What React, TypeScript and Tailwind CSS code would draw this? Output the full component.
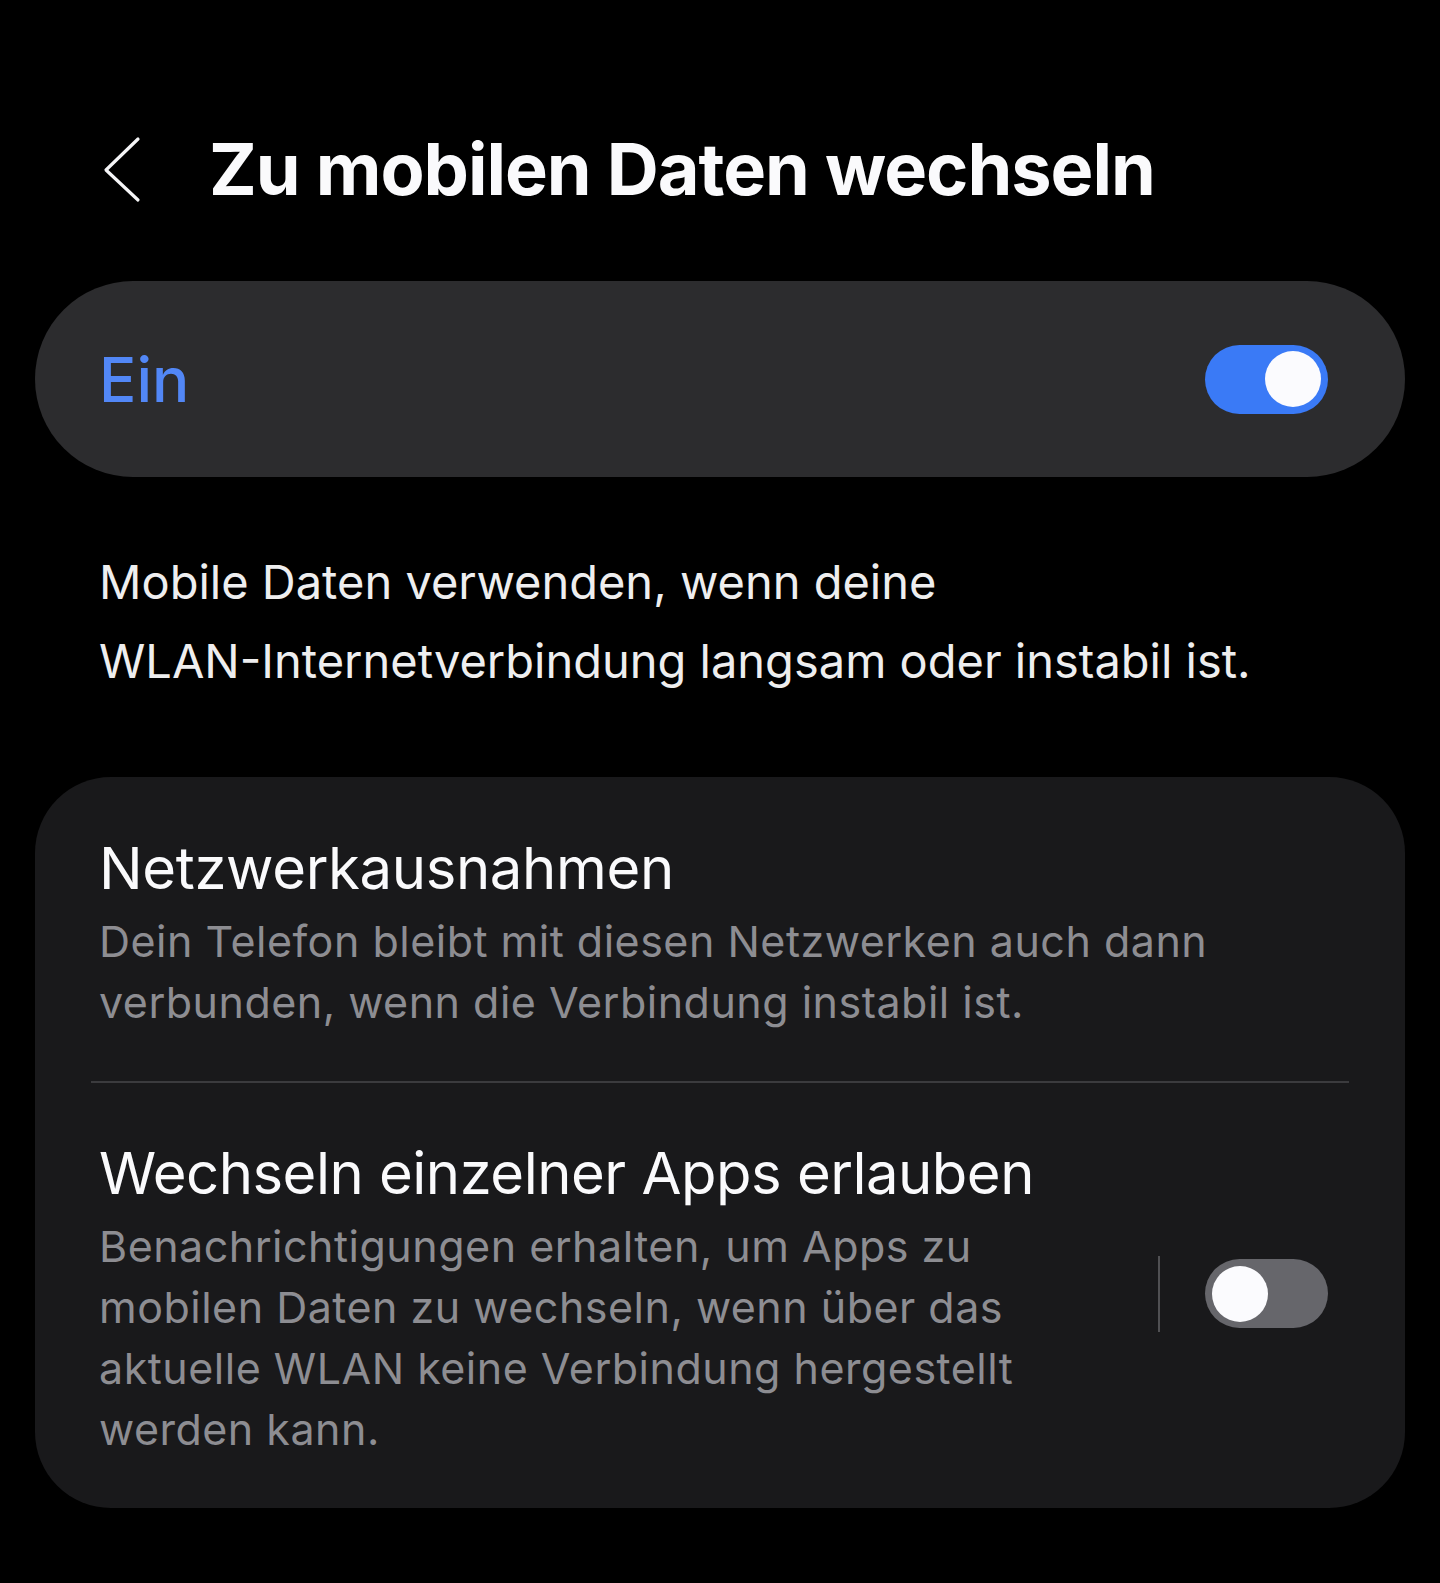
import React from 'react';

interface ToggleProps {
  on: boolean;
}

const Toggle = ({ on }: ToggleProps) => {
  return (
    <div
      className={`flex h-[69px] w-[123px] shrink-0 items-center rounded-full px-[7px] ${
        on ? 'justify-end bg-[#3a7af6]' : 'justify-start bg-[#66666b]'
      }`}
    >
      <div className="h-[56px] w-[56px] rounded-full bg-[#fbfbfe]" />
    </div>
  );
};

const BackChevron = () => (
  <svg width="40" height="68" viewBox="0 0 40 68" fill="none" className="shrink-0">
    <polyline
      points="35,4 3,35 35,65"
      stroke="#f5f5f7"
      strokeWidth="3.2"
      strokeLinecap="round"
      strokeLinejoin="round"
    />
  </svg>
);

const App = () => {
  return (
    <div
      className="min-h-[1583px] bg-black px-[35px] pt-[133px]"
      style={{ fontFamily: 'Inter, "Noto Sans", sans-serif' }}
    >
      {/* header */}
      <div className="flex h-[72px] items-center pl-[68px]">
        <BackChevron />
        <h1 className="ml-[66px] text-[72px] font-bold leading-[72px] tracking-[-1px] text-[#fafafc]">
          Zu mobilen Daten wechseln
        </h1>
      </div>

      {/* master switch */}
      <div className="mt-[76px] flex h-[196px] items-center justify-between rounded-full bg-[#2c2c2e] pl-[64px] pr-[77px]">
        <span className="text-[62px] font-medium text-[#5287f6]">Ein</span>
        <Toggle on />
      </div>

      <p className="mt-[65px] pl-[64px] text-[47px] leading-[79px] text-[#eeeeef]">
        Mobile Daten verwenden, wenn deine
        <br />
        WLAN-Internetverbindung langsam oder instabil ist.
      </p>

      {/* options */}
      <div className="mt-[77px] rounded-[76px] bg-[#19191b]">
        <div className="px-[64px] pb-[48px] pt-[55px]">
          <h2 className="text-[58px] leading-[72px] tracking-[-0.35px] text-[#fafafc]">
            Netzwerkausnahmen
          </h2>
          <p className="mt-[7px] text-[43px] leading-[61px] tracking-[0.5px] text-[#8d8d92]">
            Dein Telefon bleibt mit diesen Netzwerken auch dann verbunden, wenn die Verbindung
            instabil ist.
          </p>
        </div>

        <div className="mx-[56px] h-[2px] bg-[#3b3b3e]" />

        <div className="flex items-center pb-[48px] pl-[64px] pr-[77px] pt-[54px]">
          <div className="min-w-0 flex-1 pr-[40px]">
            <h2 className="text-[58px] leading-[72px] tracking-[-0.5px] text-[#fafafc]">
              Wechseln einzelner Apps erlauben
            </h2>
            <p className="mt-[7px] text-[43px] leading-[61px] tracking-[0.5px] text-[#8d8d92]">
              Benachrichtigungen erhalten, um Apps zu mobilen Daten zu wechseln, wenn über das
              aktuelle WLAN keine Verbindung hergestellt werden kann.
            </p>
          </div>
          <div className="mb-[10px] h-[76px] w-[2px] shrink-0 bg-[#505053]" />
          <div className="mb-[10px] ml-[45px]">
            <Toggle on={false} />
          </div>
        </div>
      </div>
    </div>
  );
};

export default App;
